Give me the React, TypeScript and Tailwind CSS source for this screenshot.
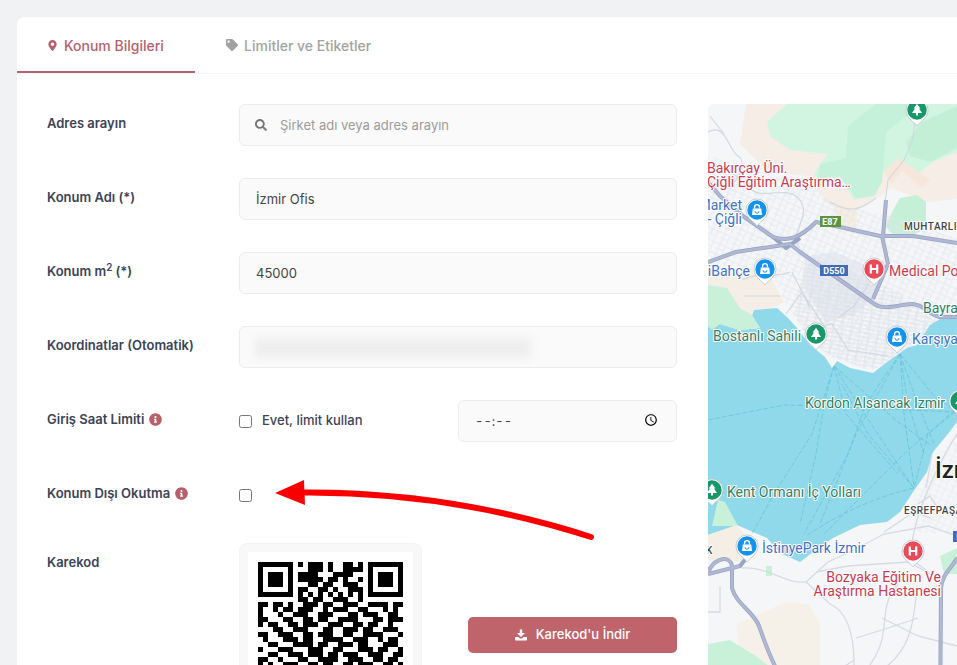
import type { ReactNode } from 'react'
import { FaInfoCircle, FaMapMarkerAlt, FaSearch, FaTag } from 'react-icons/fa'
import { MdAccessTime } from 'react-icons/md'

const inputClass =
  'w-full h-[42px] rounded-md border border-[#ececec] bg-[#fafafa] px-4 text-[13px] text-[#444] placeholder:text-[#9b9b9b] focus:outline-none focus:border-[#c1656d]'

const qrRows = [
  '11111110101110100110111101111111',
  '1000001000111010011110001001000001',
  '1011101011110001111001110101011101',
  '1011101011111011010011001101011101',
  '1011101000110110011100110101011101',
  '1000001011001101001110011001000001',
  '1111111010101010101010101011111111',
  '00000000110110011100110000000',
  '11011010011101100111001111011',
  '10010110111001011100110001010',
  '10001001110011100011011100110',
  '11000110011011001111000110111',
  '10110011011100111001101100100',
  '00011001110001100111011001110',
  '11001110011011100110011110001',
  '01000111011001111001110010110',
  '00110001111011001110110001110',
  '10001110001110011000111011001',
  '00110011101110110111001110011',
  '11001000110011110011100110110',
  '10100111001101100110111001101',
  '00000000111001001011100010100',
  '11111110010110101101101011001',
  '10000010110011010011100011110',
  '10111010101101011010111110101',
  '10111010011010100111010110011',
  '10111010100111010100101101110',
  '10000010111000101101010011001',
  '11111110101101011011001101011',
]

// The three finder squares are drawn over the module rows
const finders = [
  [0, 0],
  [22, 0],
  [0, 22],
]

const QrCode = () => (
  <svg viewBox="0 0 29 29" className="block h-[145px] w-[145px]" shapeRendering="crispEdges" role="img" aria-label="Karekod">
    {qrRows.map((row, y) =>
      row.split('').map((cell, x) => (cell === '1' ? <rect key={`${x}-${y}`} x={x} y={y} width="1" height="1" /> : null)),
    )}
    {finders.map(([x, y]) => (
      <g key={`${x}-${y}`} transform={`translate(${x} ${y})`}>
        <rect x="-1" y="-1" width="9" height="9" fill="#fff" />
        <rect width="7" height="7" />
        <rect x="1" y="1" width="5" height="5" fill="#fff" />
        <rect x="2" y="2" width="3" height="3" />
      </g>
    ))}
  </svg>
)

const DownloadIcon = () => (
  <svg viewBox="0 0 12 12" className="h-3 w-3" fill="currentColor" aria-hidden="true">
    <path d="M4.8 0.5H7.2V4H10L6 8 2 4H4.8Z" />
    <path d="M0.8 8H3.4L5 9.6H7L8.6 8H11.2Q12 8 12 8.8V10.7Q12 11.5 11.2 11.5H0.8Q0 11.5 0 10.7V8.8Q0 8 0.8 8Z" />
  </svg>
)

const FormRow = ({ label, htmlFor, info, children }: { label: ReactNode; htmlFor?: string; info?: boolean; children: ReactNode }) => (
  <div className="grid grid-cols-[192px_minmax(0,1fr)] items-start">
    <div className="flex items-center gap-[5px] pt-[9px] text-[13px] leading-5 font-semibold text-[#3b4357]">
      <label htmlFor={htmlFor}>{label}</label>
      {info && <FaInfoCircle className="h-[13px] w-[13px] text-[#b95f69]" />}
    </div>
    {children}
  </div>
)

const pinColors = { shop: '#1492f0', park: '#17976a', hospital: '#ea4a58' }

const Pin = ({ x, y, kind }: { x: number; y: number; kind: 'shop' | 'park' | 'hospital' }) => (
  <g transform={`translate(${x} ${y})`}>
    <path d="M0 16 C-2 12-11 9-11 0 A11 11 0 1 1 11 0 C11 9 2 12 0 16Z" fill="#fff" stroke="#b4bac2" strokeWidth="0.7" />
    <circle r="9.7" fill={pinColors[kind]} />
    {kind === 'shop' && (
      <>
        <path d="M-4.2-1.5H4.2L5 5H-5Z" fill="#fff" />
        <path d="M-2.4-1.5V-3a2.4 2.4 0 0 1 4.8 0v1.5" fill="none" stroke="#fff" strokeWidth="1.4" />
        <path d="M-2 1.2a2 2 0 0 0 4 0" fill="none" stroke="#1492f0" strokeWidth="1" />
      </>
    )}
    {kind === 'park' && <path d="M0-6.2 3.4-1.5H2L5 3H1V5.6H-1V3H-5L-2-1.5H-3.4Z" fill="#fff" />}
    {kind === 'hospital' && <path d="M-3.2-4.5V4.5M3.2-4.5V4.5M-3.2 0H3.2" stroke="#fff" strokeWidth="2.2" fill="none" />}
  </g>
)

const Map = () => (
  <svg viewBox="0 0 249 622" preserveAspectRatio="xMinYMin slice" className="block h-full w-full" role="img" aria-label="Harita">
    <defs>
      <pattern id="streets" width="13" height="11" patternUnits="userSpaceOnUse" patternTransform="rotate(24)">
        <path d="M0 2H13M0 7H8M3 0V11M9 2V11" stroke="#e1e4ec" strokeWidth="0.8" fill="none" />
      </pattern>
      <pattern id="blocks" width="9" height="8" patternUnits="userSpaceOnUse" patternTransform="rotate(8)">
        <path d="M0 1H9M2 0V8M0 5H9" stroke="#dcdfe5" strokeWidth="0.8" fill="none" />
      </pattern>
    </defs>
    <rect width="249" height="622" fill="#f5f6f8" />

    {/* Hills and parks */}
    <path d="M38 0H249V95L218 98 184 84 160 100 140 112 118 98 100 72 60 68 32 40Z" fill="#f5ede6" />
    <path d="M59 18 79 0H249V48L225 58 210 70 192 56 186 76 172 66 168 91 146 96 134 76 112 78 106 70 119 50 82 46 62 32Z" fill="#d1f5e1" />
    <path d="M140 22 168 0H214L178 28 174 78 166 92 148 94 132 72 110 74 112 60 138 54Z" fill="#c5f0d9" />
    <path d="M214 18 249 2V44L222 58 202 52 198 38Z" fill="#c3efd7" />
    <path d="M190 54 202 62 222 76 214 84 194 66 184 80 176 68Z" fill="#f6e6dc" />
    <path d="M184 108 192 94 209 91 218 98V124L205 131H185L178 122Z" fill="#c5efd7" />
    <path d="M0 168 58 164 76 198 42 216 0 190Z" fill="#f5eee6" />
    <path d="M126 102 150 108 146 130 130 124Z" fill="#f6eee0" />

    {/* Streets */}
    <path d="M0 52 30 60 66 74 98 74 124 100 182 112 249 134V214L232 216 208 240 180 256 160 266 120 252 98 232 76 196 62 166 0 160Z" fill="url(#streets)" />
    <path d="M98 150 190 188 228 218 208 240 166 266 122 252 102 236 86 210Z" fill="url(#blocks)" />
    <path d="M100 152 126 148 160 162 172 186 148 210 118 218 96 184Z" fill="#d9dee8" opacity="0.45" />
    <g fill="none" stroke="#d2d7e0" strokeWidth="1.1">
      <path d="M0 28C18 18 20 46 30 52S30 80 16 86M2 12 16 30M0 62C20 60 32 76 44 86S80 80 92 96 80 130 92 144" />
      <path d="M34 176C48 168 70 174 82 168M36 192H72M78 210 94 188 116 222 124 220 140 246 180 252M84 168 102 204M130 214 146 202 166 172" />
      <path d="M206 12C208 34 202 42 196 56L180 76 176 108M122 98C140 108 150 108 168 94" />
    </g>

    {/* Bay */}
    <path
      d="M0 214 12 220 32 226 52 224 44 212 46 206 69 204 80 214 89 224 102 241 117 253 124 264 129 257 142 264 165 269 179 258 199 244 209 241 222 221 232 215 249 213V318L239 331 225 348 219 368 205 388 192 408 179 418 152 421 125 434 105 448 92 458 72 449 59 434 29 421 0 431Z"
      fill="#8fd9ea"
    />
    <path d="M0 181 19 184 32 204 44 211 52 224 32 226 12 220 4 226 0 222Z" fill="#c9f1da" />
    <path d="M10 396 17 398 30 422H4Z" fill="#c9f1da" />
    <g fill="none" stroke="#68c3da" strokeWidth="0.8" strokeDasharray="5 2">
      <path d="M126 262 104 330 66 390 44 430M126 262 116 300 108 350 92 420M126 262 150 300 204 382M126 262 138 310 190 370" />
      <path d="M192 250 158 300 140 350 96 430M192 250 148 330 112 420M192 250 196 310 206 382M192 250 206 290 226 340M192 250 226 292 247 306" />
      <path d="M0 316 76 301 110 302 247 308M247 306 196 350 116 430M247 308 220 330 206 384M206 384C170 392 130 410 98 432" />
      <path d="M126 262 190 318 224 342M192 250 200 300 216 350M206 384 160 330 134 280" />
    </g>

    {/* South side */}
    <path d="M0 431 29 421 44 440 38 458 0 456Z" fill="#f4eee4" />
    <path d="M28 520 60 506 78 498 100 500 112 520V561L104 622H74L58 580 34 560Z" fill="#f6f1e8" />
    <path d="M0 540 22 536 48 552 66 566 72 622H0Z" fill="#c9f1da" />
    <path d="M232 452 249 444V470L236 470Z" fill="#c9f1da" />
    <path d="M58 462H64V472H58Z" fill="#c9f1da" />
    <path d="M206 388 219 368 230 352 249 328V430L206 428Z" fill="url(#streets)" opacity="0.7" />
    <g fill="none" stroke="#d6dae3" strokeWidth="1.3">
      <path d="M34 464C60 462 76 480 98 478L122 500C140 508 146 530 146 560L138 622M98 478 120 458 150 444 176 430 220 422 249 432" />
      <path d="M249 330C236 350 214 392 206 428S210 456 222 470M108 468 140 462 200 458 230 474M190 480C172 500 180 520 172 542S150 570 152 590" />
      <path d="M148 534 174 526 210 514M174 514 210 532 249 542M209 482C206 520 202 550 170 568M0 508H12V482M128 568 146 556" />
      <path d="M210 400 222 392 232 408 249 410M176 428 206 408 222 414M224 350 218 384" />
    </g>

    {/* Motorways */}
    <g fill="none" strokeLinejoin="round">
      <path
        d="M0 78 12 92 35 112 65 133C80 138 92 134 108 118L132 123 172 132 205 132 249 139M0 158 28 148 82 140 92 148 125 171 165 199C176 208 192 200 204 200S222 212 232 213L249 213M178 96 175 132M174 132 180 160 165 195M65 133 78 144 92 134"
        stroke="#99a4c4"
        strokeWidth="4"
      />
      <path
        d="M0 78 12 92 35 112 65 133C80 138 92 134 108 118L132 123 172 132 205 132 249 139M0 158 28 148 82 140 92 148 125 171 165 199C176 208 192 200 204 200S222 212 232 213L249 213M178 96 175 132M174 132 180 160 165 195"
        stroke="#b0b9d4"
        strokeWidth="2.4"
      />
      <path d="M0 468C8 452 22 452 24 462V484C28 500 46 508 51 522S60 548 67 562L84 622M0 470 32 462 48 442M249 454C244 464 234 470 233 484L232 622" stroke="#99a4c4" strokeWidth="4" />
      <path d="M0 468C8 452 22 452 24 462V484C28 500 46 508 51 522S60 548 67 562L84 622M0 470 32 462M249 454C244 464 234 470 233 484L232 622" stroke="#b0b9d4" strokeWidth="2.4" />
    </g>
    <g fontFamily="Roboto, sans-serif" fontSize="9" fontWeight="700" fill="#fff" textAnchor="middle">
      <rect x="112" y="112" width="21" height="11" fill="#5c9440" />
      <text x="122" y="121">E87</text>
      <rect x="112" y="161" width="28" height="11" fill="#3f6cb5" />
      <text x="126" y="170">D550</text>
      <rect x="245" y="427" width="28" height="11" fill="#3f6cb5" />
      <text x="259" y="436">D300</text>
    </g>

    <Pin x={209} y={6} kind="park" />
    <Pin x={49} y={106} kind="shop" />
    <Pin x={57} y={165} kind="shop" />
    <Pin x={166} y={165} kind="hospital" />
    <Pin x={108} y={230} kind="park" />
    <Pin x={189} y={233} kind="shop" />
    <Pin x={252} y={297} kind="park" />
    <Pin x={4} y={386} kind="park" />
    <Pin x={39} y={442} kind="shop" />
    <Pin x={205} y={447} kind="hospital" />

    {/* Place names */}
    <g fontFamily="Roboto, sans-serif" fontSize="14" stroke="#fff" strokeWidth="2" strokeLinejoin="round" paintOrder="stroke">
      <g fill="#c93a50">
        <text x="-1" y="69">Bakırçay Üni.</text>
        <text x="-1" y="83">Çiğli Eğitim Araştırma…</text>
        <text x="181" y="172">Medical Po</text>
        <text x="233" y="478" textAnchor="end">Bozyaka Eğitim Ve</text>
        <text x="233" y="492" textAnchor="end">Araştırma Hastanesi</text>
      </g>
      <g fill="#3e71c4">
        <text x="34" y="106" textAnchor="end">Market</text>
        <text x="34" y="120" textAnchor="end">- Çiğli</text>
        <text x="42" y="172" textAnchor="end">iBahçe</text>
        <text x="204" y="240">Karşıya</text>
        <text x="54" y="449">İstinyePark İzmir</text>
      </g>
      <g fill="#2f8065">
        <text x="5" y="237">Bostanlı Sahili</text>
        <text x="215" y="209">Bayra</text>
        <text x="97" y="304">Kordon Alsancak Izmir</text>
        <text x="19" y="393">Kent Ormanı İç Yolları</text>
      </g>
      <g fill="#444" fontSize="10" fontWeight="500" className="tracking-wider">
        <text x="196" y="126">MUHTARLI</text>
        <text x="196" y="410">EŞREFPAŞA</text>
        <text x="-2" y="450">K</text>
      </g>
      <text x="227" y="374" fill="#222" fontSize="24" fontWeight="500">İzmir</text>
    </g>
  </svg>
)

export default function App() {
  return (
    <div className="h-screen overflow-hidden bg-[#f1f2f4] pt-[17px] pl-[17px] font-['Inter',sans-serif]">
      <div className="min-h-full rounded-tl-lg bg-white">
        {/* Tabs */}
        <nav className="flex h-[57px] border-b border-[#f4f5f6] text-[14px] font-medium">
          <button type="button" className="flex w-[178px] items-center gap-[7px] border-b-2 border-[#b5606d] pt-[2px] pl-[31px] text-[#b5606d]">
            <FaMapMarkerAlt className="h-[11px] w-[9px]" />
            Konum Bilgileri
          </button>
          <button type="button" className="flex items-center gap-[6px] pl-[31px] text-[#a2a2a2]">
            <FaTag className="h-3 w-3" />
            Limitler ve Etiketler
          </button>
        </nav>

        <div className="grid grid-cols-[minmax(0,630px)_minmax(0,1fr)] gap-[31px] pt-[30px] pl-[30px]">
          <form className="flex flex-col gap-8">
            <FormRow label="Adres arayın" htmlFor="address">
              <div className="relative">
                <FaSearch className="absolute top-[15px] left-4 h-3 w-3 text-[#777]" />
                <input id="address" type="text" placeholder="Şirket adı veya adres arayın" className={`${inputClass} pl-10`} />
              </div>
            </FormRow>
            <FormRow label="Konum Adı (*)" htmlFor="name">
              <input id="name" type="text" defaultValue="İzmir Ofis" className={inputClass} />
            </FormRow>
            <FormRow label={<>Konum m<sup>2</sup> (*)</>} htmlFor="area">
              <input id="area" type="text" defaultValue="45000" className={inputClass} />
            </FormRow>
            <FormRow label="Koordinatlar (Otomatik)" htmlFor="coordinates">
              <div className="relative">
                <input id="coordinates" type="text" readOnly className={inputClass} />
                {/* Hidden coordinates */}
                <div className="absolute top-3 left-4 h-5 w-[276px] bg-[#eeeeee] blur-[4px]" />
              </div>
            </FormRow>
            <FormRow label="Giriş Saat Limiti" htmlFor="limit" info>
              <div className="grid grid-cols-2 items-center">
                <label className="flex items-center gap-[10px] text-[13px] font-medium text-[#3b4357]">
                  <input id="limit" type="checkbox" className="h-[13px] w-[13px]" />
                  Evet, limit kullan
                </label>
                <div className="relative">
                  <input type="text" placeholder="--:--" aria-label="Saat" className={`${inputClass} tabular-nums placeholder:text-[#444]`} />
                  <MdAccessTime className="absolute top-[13px] right-[19px] h-[14px] w-[14px] text-black" />
                </div>
              </div>
            </FormRow>
            <FormRow label="Konum Dışı Okutma" htmlFor="outside" info>
              <div className="relative flex h-[37px] items-center pt-[5px]">
                <input id="outside" type="checkbox" className="h-[13px] w-[13px]" />
                <svg viewBox="0 0 320 62" className="pointer-events-none absolute top-[6px] left-9 z-10 h-[62px] w-[320px]" aria-hidden="true">
                  <path d="M28 12.5Q175 11.5 316 57" fill="none" stroke="#f90000" strokeWidth="6" strokeLinecap="round" />
                  <path d="M0 13 29 0 30 25Z" fill="#f90000" />
                </svg>
              </div>
            </FormRow>
            <FormRow label="Karekod">
              <div className="flex items-center justify-between">
                <div className="rounded-lg border border-[#f3f3f3] bg-[#f8f8f8] p-2">
                  <div className="bg-white p-[10px]">
                    <QrCode />
                  </div>
                </div>
                <button type="button" className="flex h-9 w-[209px] items-center justify-center gap-[9px] rounded-[5px] bg-[#c0646c] text-[13px] font-medium text-white">
                  <DownloadIcon />
                  Karekod'u İndir
                </button>
              </div>
            </FormRow>
          </form>

          <div className="overflow-hidden rounded-tl-md">
            <Map />
          </div>
        </div>
      </div>
    </div>
  )
}
